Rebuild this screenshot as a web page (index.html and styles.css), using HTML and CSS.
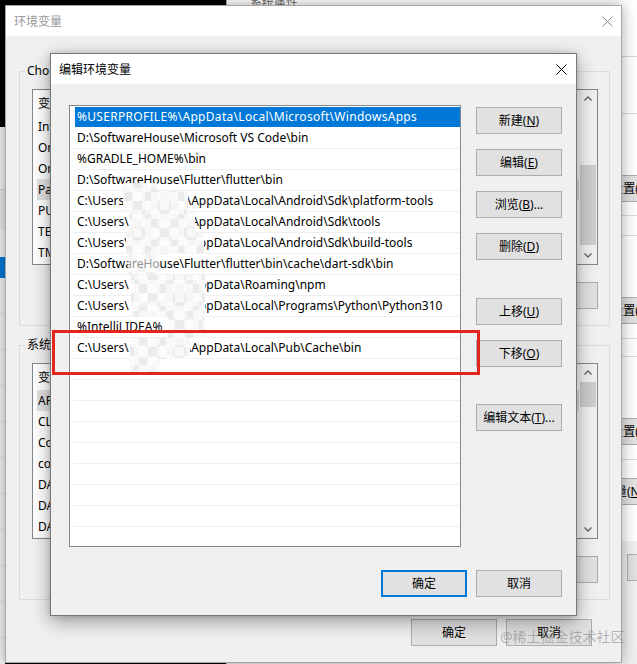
FILE: index.html
```html
<!DOCTYPE html>
<html lang="zh-CN">
<head>
<meta charset="utf-8">
<title>编辑环境变量</title>
<link rel="stylesheet" href="styles.css">
</head>
<body>
<div class="desk">

  <div class="win backleft">
    <div class="bl-a"></div>
    <div class="bl-b"></div>
    <div class="bl-c"></div>
    <div class="bl-sel"></div>
    <div class="bl-row"></div>
    <div class="bl-row"></div>
    <div class="bl-row"></div>
    <div class="bl-row"></div>
    <div class="bl-row"></div>
    <div class="bl-row"></div>
    <div class="bl-row"></div>
    <div class="bl-row"></div>
    <div class="bl-row"></div>
    <div class="bl-row"></div>
  </div>

  <div class="win sysprops">
    <div class="titlebar"><span class="title">系统属性</span></div>
    <div class="sp-tabs"></div>
    <div class="sp-page">
      <div class="sp-group"><button class="btn sp-btn">设置(<u>S</u>)...</button></div>
      <div class="sp-group"><button class="btn sp-btn">设置(<u>E</u>)...</button></div>
      <div class="sp-group"><button class="btn sp-btn">设置(<u>T</u>)...</button></div>
      <button class="btn sp-env">环境变量(<u>N</u>)...</button>
    </div>
    <div class="sp-foot">
      <button class="btn">确定</button>
      <button class="btn">取消</button>
      <button class="btn">应用(<u>A</u>)</button>
    </div>
  </div>

  <div class="win envwin">
    <div class="titlebar">
      <span class="title inactive">环境变量</span>
      <svg class="close inactive" viewBox="0 0 11 11"><path d="M0.5 0.5L10.5 10.5M10.5 0.5L0.5 10.5"/></svg>
    </div>
    <div class="env-body">
      <div class="group">
        <span class="group-label">Cho 的用户变量(<u>U</u>)</span>
        <div class="lv">
          <div class="lv-main">
            <div class="lv-head"><span class="c1">变量</span><span class="c2">值</span></div>
            <div class="lv-row"><span class="c1">IntelliJ IDEA</span><span class="c2">D:\SoftwareHouse\IntelliJ IDEA\bin;</span></div>
            <div class="lv-row"><span class="c1">OneDrive</span><span class="c2">C:\Users\OneDrive</span></div>
            <div class="lv-row"><span class="c1">OneDriveConsumer</span><span class="c2">C:\Users\OneDrive</span></div>
            <div class="lv-row lv-sel"><span class="c1">Path</span><span class="c2">%USERPROFILE%\AppData\Local\Microsoft\WindowsApps;</span></div>
            <div class="lv-row"><span class="c1">PUB_HOSTED_URL</span><span class="c2">https://pub.flutter-io.cn</span></div>
            <div class="lv-row"><span class="c1">TEMP</span><span class="c2">%USERPROFILE%\AppData\Local\Temp</span></div>
            <div class="lv-row"><span class="c1">TMP</span><span class="c2">%USERPROFILE%\AppData\Local\Temp</span></div>
          </div>
          <div class="vscroll">
            <div class="arrow"><svg viewBox="0 0 8 5"><polyline points="0.5,4.5 4,1 7.5,4.5"/></svg></div>
            <div class="track"><div class="thumb thumb-a"></div></div>
            <div class="arrow"><svg viewBox="0 0 8 5"><polyline points="0.5,0.5 4,4 7.5,0.5"/></svg></div>
          </div>
        </div>
        <div class="btnrow">
          <button class="btn">新建(<u>N</u>)...</button>
          <button class="btn">编辑(<u>E</u>)...</button>
          <button class="btn">删除(<u>D</u>)</button>
        </div>
      </div>

      <div class="group">
        <span class="group-label">系统变量(<u>S</u>)</span>
        <div class="lv">
          <div class="lv-main">
            <div class="lv-head"><span class="c1">变量</span><span class="c2">值</span></div>
            <div class="lv-row lv-sel"><span class="c1">ARCHIVE_PATH</span><span class="c2">D:\Archive</span></div>
            <div class="lv-row"><span class="c1">CLASSPATH</span><span class="c2">.;%JAVA_HOME%\lib</span></div>
            <div class="lv-row"><span class="c1">ComSpec</span><span class="c2">C:\Windows\system32\cmd.exe</span></div>
            <div class="lv-row"><span class="c1">configsetroot</span><span class="c2">C:\Windows\ConfigSetRoot</span></div>
            <div class="lv-row"><span class="c1">DART_HOME</span><span class="c2">D:\SoftwareHouse\dart</span></div>
            <div class="lv-row"><span class="c1">DART_SDK</span><span class="c2">D:\SoftwareHouse\dart-sdk</span></div>
            <div class="lv-row"><span class="c1">DATA_PATH</span><span class="c2">D:\Data</span></div>
          </div>
          <div class="vscroll">
            <div class="arrow"><svg viewBox="0 0 8 5"><polyline points="0.5,4.5 4,1 7.5,4.5"/></svg></div>
            <div class="track"><div class="thumb thumb-b"></div></div>
            <div class="arrow"><svg viewBox="0 0 8 5"><polyline points="0.5,0.5 4,4 7.5,0.5"/></svg></div>
          </div>
        </div>
        <div class="btnrow">
          <button class="btn">新建(<u>W</u>)...</button>
          <button class="btn">编辑(<u>I</u>)...</button>
          <button class="btn">删除(<u>L</u>)</button>
        </div>
      </div>

      <div class="env-foot">
        <button class="btn">确定</button>
        <button class="btn">取消</button>
      </div>
    </div>
  </div>

  <div class="win editwin">
    <div class="titlebar">
      <span class="title">编辑环境变量</span>
      <svg class="close" viewBox="0 0 11 11"><path d="M0.5 0.5L10.5 10.5M10.5 0.5L0.5 10.5"/></svg>
    </div>
    <div class="edit-body">
      <ul class="pathlist">
        <li class="sel">%USERPROFILE%\AppData\Local\Microsoft\WindowsApps</li>
        <li>D:\SoftwareHouse\Microsoft VS Code\bin</li>
        <li>%GRADLE_HOME%\bin</li>
        <li>D:\SoftwareHouse\Flutter\flutter\bin</li>
        <li>C:\Users\<span class="uname"></span>\AppData\Local\Android\Sdk\platform-tools</li>
        <li>C:\Users\<span class="uname"></span>\AppData\Local\Android\Sdk\tools</li>
        <li>C:\Users\<span class="uname"></span>\AppData\Local\Android\Sdk\build-tools</li>
        <li>D:\SoftwareHouse\Flutter\flutter\bin\cache\dart-sdk\bin</li>
        <li>C:\Users\<span class="uname"></span>\AppData\Roaming\npm</li>
        <li>C:\Users\<span class="uname"></span>\AppData\Local\Programs\Python\Python310</li>
        <li>%IntelliJ IDEA%</li>
        <li>C:\Users\<span class="uname"></span>\AppData\Local\Pub\Cache\bin</li>
        <li></li>
        <li></li>
        <li></li>
        <li></li>
        <li></li>
        <li></li>
        <li></li>
        <li></li>
        <li></li>
      </ul>
      <div class="side">
        <button class="btn">新建(<u>N</u>)</button>
        <button class="btn">编辑(<u>E</u>)</button>
        <button class="btn">浏览(<u>B</u>)...</button>
        <button class="btn">删除(<u>D</u>)</button>
        <button class="btn sep">上移(<u>U</u>)</button>
        <button class="btn">下移(<u>O</u>)</button>
        <button class="btn sep">编辑文本(<u>T</u>)...</button>
      </div>
      <div class="edit-foot">
        <button class="btn default">确定</button>
        <button class="btn">取消</button>
      </div>
    </div>
  </div>

  <div class="mosaic mosaic-top"></div>
  <div class="mosaic mosaic-mid"></div>
  <div class="mosaic mosaic-bot"></div>
  <div class="redbox"></div>
  <div class="watermark">@稀土掘金技术社区</div>
</div>
</body>
</html>
```

FILE: styles.css
```css
* { box-sizing: border-box; }
html, body { margin: 0; padding: 0; }
body {
  width: 637px;
  height: 664px;
  overflow: hidden;
  background: #000;
  font-family: "Noto Sans", "Noto Sans CJK SC", sans-serif;
  font-size: 12px;
  color: #000;
}
.desk { position: relative; width: 637px; height: 664px; overflow: hidden; }

button {
  font: inherit;
  color: inherit;
  margin: 0;
  padding: 0;
}
.btn {
  flex: none;
  width: 86px;
  height: 27px;
  background: #e1e1e1;
  border: 1px solid #adadad;
  border-radius: 0;
  line-height: 25px;
  text-align: center;
  white-space: nowrap;
}
.btn.default { border: 2px solid #0078d7; line-height: 23px; }

.win {
  position: absolute;
  display: flex;
  flex-direction: column;
  background: #f0f0f0;
}
.titlebar {
  flex: none;
  height: 30px;
  background: #fff;
  display: flex;
  align-items: center;
  padding-left: 8px;
}
.title { white-space: nowrap; }
.title.inactive { color: #9a9a9a; }
.close { width: 11px; height: 11px; margin-left: auto; fill: none; stroke: #000; stroke-width: 1; }
.close.inactive { stroke: #8a8a8a; }

/* left background window sliver */
.backleft {
  left: -295px; top: 127px; width: 300px; height: 560px;
  background: #f2f2f2;
}
.bl-a { height: 63px; border-bottom: 1px solid #cfcfcf; }
.bl-b { height: 40px; background: #e9e9e9; }
.bl-c { height: 27px; }
.bl-sel { height: 21px; background: #0078d7; }
.bl-row { height: 36px; border-bottom: 1px solid #e2e2e2; }

/* system properties window behind */
.sysprops {
  left: 226px; top: -14px; width: 480px; height: 700px;
  border: 1px solid #aaa;
}
.sysprops .titlebar { padding-left: 23px; }
.sysprops .title { color: #6a6a6a; }
.sp-tabs { flex: none; height: 40px; background: #fff; border-bottom: 1px solid #d9d9d9; }
.sp-page {
  flex: none;
  background: #fff;
  display: flex;
  flex-direction: column;
  padding: 56px 12px 36px 12px;
}
.sp-group {
  height: 103px;
  border: 1px solid #dcdcdc;
  padding: 61px 0 0 352px;
  margin-bottom: 19px;
}
.sp-group + .sp-group { height: 104px; margin-bottom: 17px; }
.sp-env { margin-left: 334px; margin-top: 1px; }
.sp-foot { flex: 1; display: flex; gap: 9px; padding: 13px 0 0 400px; background: #f0f0f0; }

/* environment variables window */
.envwin {
  left: 5px; top: 5px; width: 617px; height: 658px;
  border: 1px solid #a6a6a6;
  box-shadow: 0 0 14px rgba(0,0,0,0.35);
}
.envwin .close { margin-right: 8px; }
.env-body {
  flex: 1;
  display: flex;
  flex-direction: column;
  padding: 35px 11px 0 13px;
}
.group {
  display: flex;
  flex-direction: column;
  border: 1px solid #dcdcdc;
  padding: 0 11px 16px 12px;
}
.group + .group { margin-top: 19px; }
.group-label {
  align-self: flex-start;
  height: 16px;
  line-height: 16px;
  margin: -9px 0 0 -7px;
  padding: 0 2px;
  background: #f0f0f0;
  white-space: nowrap;
}
.lv {
  margin-top: 10px;
  height: 176px;
  display: flex;
  border: 1px solid #828790;
  background: #fff;
}
.lv-main { flex: 1; overflow: hidden; padding-left: 4px; }
.lv-head { height: 26px; display: flex; align-items: center; padding-left: 1px; }
.lv-row { height: 21px; line-height: 21px; display: flex; padding-left: 1px; white-space: nowrap; }
.lv-sel { background: #e2e2e2; }
.c1 { width: 150px; flex: none; overflow: hidden; }
.c2 { flex: 1; overflow: hidden; }
.vscroll {
  width: 18px;
  flex: none;
  background: #f0f0f0;
  display: flex;
  flex-direction: column;
}
.arrow { height: 17px; flex: none; display: flex; align-items: center; justify-content: center; }
.arrow svg { width: 8px; height: 5px; fill: none; stroke: #606060; stroke-width: 1.3; }
.track { flex: 1; padding: 0 1px; }
.thumb { background: #cdcdcd; }
.thumb-a { margin-top: 58px; height: 80px; }
.thumb-b { margin-top: 1px; height: 25px; }
.btnrow { margin-top: 17px; display: flex; justify-content: flex-end; gap: 9px; }
.env-foot { margin: 19px 18px 0 0; display: flex; justify-content: flex-end; gap: 9px; }

/* edit dialog */
.editwin {
  left: 50px; top: 53px; width: 527px; height: 563px;
  border: 1px solid #777;
  box-shadow: 0 6px 18px rgba(0,0,0,0.35), 0 0 6px rgba(0,0,0,0.15);
}
.editwin .close { margin-right: 9px; }
.edit-body {
  flex: 1;
  display: grid;
  grid-template-columns: 392px 86px;
  grid-template-rows: 442px 27px;
  column-gap: 15px;
  row-gap: 23px;
  padding: 21px 14px 18px 18px;
}
.pathlist {
  margin: 0;
  list-style: none;
  background: #fff;
  border: 1px solid #828790;
  padding: 1px 0 0 3px;
  overflow: hidden;
}
.pathlist li {
  height: 21px;
  line-height: 20px;
  padding-left: 4px;
  border-bottom: 1px solid #efefef;
  white-space: nowrap;
  overflow: hidden;
}
.pathlist li.sel {
  background: #0078d7;
  color: #fff;
  border-bottom-color: #fff;
  margin-left: 2px;
  padding-left: 2px;
  letter-spacing: 0.3px;
}
.uname { display: inline-block; width: 58px; }
.side { display: flex; flex-direction: column; gap: 15px; padding-top: 2px; }
.side .sep { margin-top: 23px; }
.side .sep:last-child { margin-top: 22px; }
.edit-foot { grid-column: 1 / 3; display: flex; justify-content: flex-end; gap: 9px; }

/* overlays: pixelated privacy mosaic */
.mosaic {
  position: absolute;
  background:
    repeating-conic-gradient(rgba(255,255,255,0.55) 0 25%, rgba(255,255,255,0) 0 50%) 4px 5px / 26px 26px,
    repeating-conic-gradient(#f8f8f8 0 25%, #ebebeb 0 50%) 0 0 / 18px 18px;
}
.mosaic-top {
  left: 115px; top: 183px; width: 92px; height: 71px;
  clip-path: polygon(8px 0, 42px 0, 42px 8px, 73px 8px, 73px 29px, 80px 29px, 80px 50px, 89px 50px, 89px 71px, 11px 71px, 11px 50px, 14px 50px, 14px 29px, 8px 29px);
}
.mosaic-mid {
  left: 128px; top: 254px; width: 32px; height: 21px;
  opacity: 0.6;
}
.mosaic-bot {
  left: 130px; top: 275px; width: 76px; height: 97px;
  clip-path: polygon(1px 0, 75px 0, 75px 63px, 60px 63px, 60px 84px, 30px 84px, 30px 97px, 0 97px, 0 63px, 38px 63px, 38px 42px, 1px 42px);
}
.redbox {
  position: absolute;
  left: 52px; top: 330px; width: 428px; height: 45px;
  border: 3px solid #e3251d;
}
.watermark {
  position: absolute;
  left: 500px; top: 628px;
  font-size: 14px;
  line-height: 18px;
  color: rgba(120,120,120,0.5);
  white-space: nowrap;
}
```
